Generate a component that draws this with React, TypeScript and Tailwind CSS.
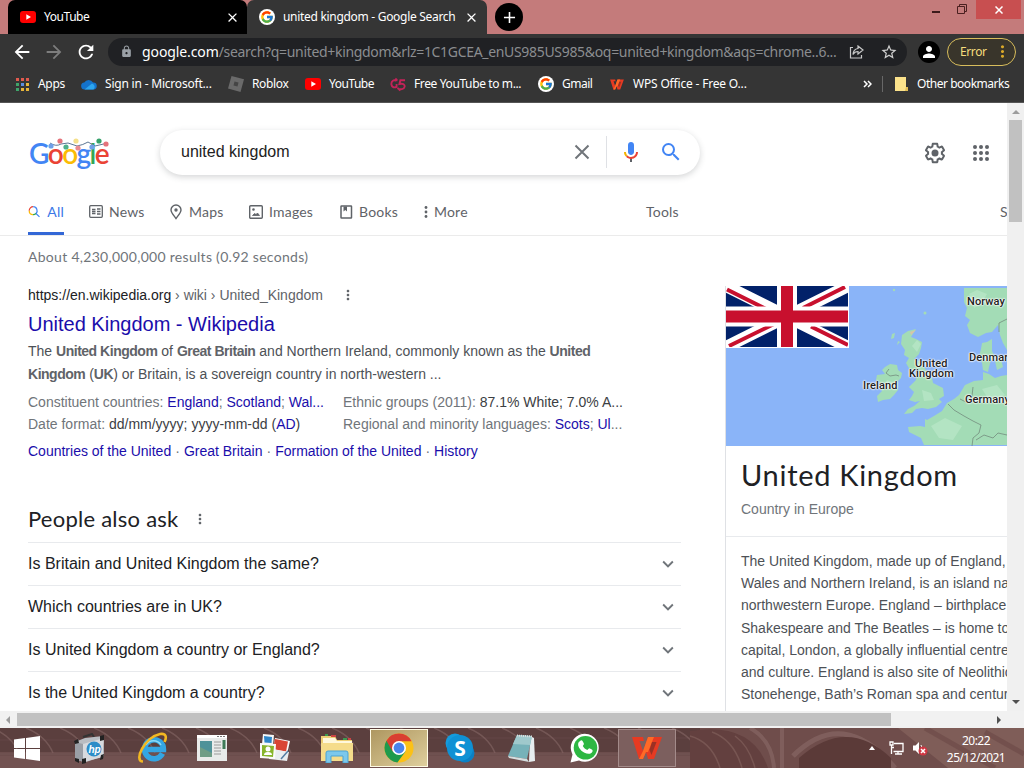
import type { ReactNode } from "react";
import clsx from "clsx";
import { FcGoogle } from "react-icons/fc";
import {
  MdArrowBack,
  MdArrowForward,
  MdRefresh,
  MdLock,
  MdStarBorder,
  MdPerson,
  MdClose,
  MdAdd,
  MdKeyboardArrowDown,
  MdMoreVert,
  MdSearch,
} from "react-icons/md";

const questions = [
  "Is Britain and United Kingdom the same?",
  "Which countries are in UK?",
  "Is United Kingdom a country or England?",
  "Is the United Kingdom a country?",
];

const aboutLines = [
  "The United Kingdom, made up of England,",
  "Wales and Northern Ireland, is an island nation",
  "northwestern Europe. England – birthplace",
  "Shakespeare and The Beatles – is home to",
  "capital, London, a globally influential centre",
  "and culture. England is also site of Neolithic",
  "Stonehenge, Bath’s Roman spa and centuries",
];

const garland = [
  { x: 22, y: 8, color: "#6f9fe8" },
  { x: 31, y: 3, color: "#e5737b" },
  { x: 37, y: 9, color: "#4fb08a" },
  { x: 47, y: 3, color: "#f5e08a" },
  { x: 49, y: 10, color: "#e98a8f" },
  { x: 63, y: 9, color: "#6f9fe8" },
  { x: 70, y: 3, color: "#36a26b" },
  { x: 77, y: 6, color: "#e5737b" },
];

function YouTubeIcon() {
  return (
    <svg width="16" height="12" viewBox="0 0 16 12">
      <rect width="16" height="12" rx="3" fill="#f00" />
      <path d="M6.3 3.3v5.4L11 6z" fill="#fff" />
    </svg>
  );
}

function GoogleBadge() {
  return (
    <span className="flex h-4 w-4 items-center justify-center rounded-full bg-white">
      <FcGoogle className="h-[14px] w-[14px]" />
    </span>
  );
}

function WpsIcon({ className }: { className?: string }) {
  return (
    <svg viewBox="0 0 30 24" className={className}>
      <path d="M0 1h11l1 4H7.500l3.500 10L16 1h14l-8 22h-6l-2-7-3 7H7z" fill="#e63a22" />
      <path d="M16 1h6l-6 15h-2l-3 7H7l4-8z" fill="#ff6a26" />
      <path d="M20 6h4.500l-5 13-2-5z" fill="#5d2a26" opacity=".55" />
    </svg>
  );
}

function ChromeIcon() {
  return (
    <svg width="30" height="30" viewBox="0 0 30 30">
      <circle cx="15" cy="15" r="14.5" fill="#fbc117" />
      <path d="M15 15L2.4 7.7A14.5 14.5 0 0 0 13.4 29.4L21.5 18.5z" fill="#1e9a4d" />
      <path d="M2.4 7.7A14.5 14.5 0 0 1 27.6 8.2H15L8.6 18.5z" fill="#d93f32" />
      <circle cx="15" cy="15" r="7" fill="#fff" />
      <circle cx="15" cy="15" r="5.4" fill="#4a84ec" />
    </svg>
  );
}

function Tabs() {
  return (
    <div className="flex h-[34px] bg-[#c47b7b]">
      <div className="flex h-[34px] flex-1">
        <div className="ml-2 flex w-[239px] items-center rounded-t-[7px] bg-black pl-3 pr-[7px]">
          <YouTubeIcon />
          <span className="ml-2 flex-1 text-[12px] tracking-[-0.45px]">YouTube</span>
          <MdClose className="h-[15px] w-[15px]" />
        </div>
        <div className="flex w-[240px] items-center rounded-t-[7px] bg-[#353535] pl-3 pr-[8px]">
          <GoogleBadge />
          <span className="ml-2 flex-1 whitespace-nowrap text-[12px] tracking-[-0.3px]">united kingdom - Google Search</span>
          <MdClose className="h-[15px] w-[15px]" />
        </div>
        <div className="ml-2 mt-[3px] flex h-7 w-7 items-center justify-center rounded-full bg-black">
          <MdAdd className="h-[19px] w-[19px]" />
        </div>
      </div>
      <div className="flex h-[19px] items-start">
        <div className="mr-[17px] mt-[11px] h-[2px] w-2 bg-[#3b1a1a]" />
        <svg className="mr-[9px] mt-1" width="10" height="10" viewBox="0 0 10 10" fill="none" stroke="#4a2020">
          <path d="M.5 2.500h7v7h-7zM2.500 2.500v-2h7v7h-2" />
        </svg>
        <div className="mr-[3px] flex h-[19px] w-[45px] items-center justify-center bg-[#c84f50]">
          <svg width="8" height="8" viewBox="0 0 8 8" stroke="#fff" strokeWidth="1.5">
            <path d="M.5.5l7 7M7.500.5l-7 7" />
          </svg>
        </div>
      </div>
    </div>
  );
}

function AddressBar() {
  return (
    <div className="flex h-[35px] items-center bg-[#353535] pl-[11px]">
      <MdArrowBack className="h-[22px] w-[22px]" />
      <MdArrowForward className="ml-[10px] h-[22px] w-[22px] text-[#7d7d7d]" />
      <MdRefresh className="ml-[10px] h-[22px] w-[22px]" />
      <div className="ml-[11px] flex h-7 w-[799px] items-center rounded-full bg-[#202124] pl-3">
        <MdLock className="h-[13px] w-[13px] text-[#9aa0a6]" />
        <div className="ml-[9px] w-[700px] whitespace-nowrap text-[14px] tracking-[-0.32px] text-[#8b8d90]">
          <span className="tracking-[-0.1px] text-white">google.com</span>
          /search?q=united+kingdom&amp;rlz=1C1GCEA_enUS985US985&amp;oq=united+kingdom&amp;aqs=chrome..6...
        </div>
        <svg className="ml-[7px]" width="15" height="14" viewBox="0 0 15 14" fill="none" stroke="#c8c8c8" strokeWidth="1.2">
          <path d="M4 2.500H1.500v10.500h11V10" />
          <path d="M9 1l5 4-5 4V6.500C6.500 6.500 5 7.500 4 9.500c.2-3.500 2-5.500 5-6z" />
        </svg>
        <MdStarBorder className="ml-[16px] h-[18px] w-[18px] text-[#d0d0d0]" />
      </div>
      <div className="ml-[11px] flex h-[22px] w-[22px] items-center justify-center rounded-full bg-black">
        <MdPerson className="h-[18px] w-[18px]" />
      </div>
      <div className="ml-[7px] flex h-7 w-[69px] items-center rounded-full border border-[#d8bd5c] bg-[#39352b] pl-3 text-[12px] tracking-[-0.4px] text-[#f5dc7c]">
        Error
        <MdMoreVert className="ml-[6px] h-[19px] w-[19px] shrink-0 text-[#dba929]" />
      </div>
    </div>
  );
}

function Bookmark({ icon, label, className }: { icon: ReactNode; label: string; className?: string }) {
  return (
    <div className={clsx("flex shrink-0 items-center whitespace-nowrap text-[12px]", className)}>
      <span className="mr-2 flex w-4 justify-center">{icon}</span>
      {label}
    </div>
  );
}

function Bookmarks() {
  const dots = ["#e15a4e", "#e15a4e", "#e15a4e", "#3fa46a", "#5a8de0", "#e7b53a", "#3fa46a", "#e7b53a", "#e7b53a"];
  return (
    <div className="flex h-[34px] items-center border-b border-[#555] bg-[#353535] pb-[3px] pl-[14px]">
      <Bookmark
        className="w-[67px] tracking-[-0.3px]"
        label="Apps"
        icon={
          <span className="grid grid-cols-3 gap-[2px]">
            {dots.map((color, i) => (
              <span key={i} className="h-[3px] w-[3px]" style={{ background: color }} />
            ))}
          </span>
        }
      />
      <Bookmark
        className="w-[147px] tracking-[-0.2px]"
        label="Sign in - Microsoft..."
        icon={
          <svg width="16" height="11" viewBox="0 0 16 11">
            <path d="M4 10.500a3.500 3.500 0 0 1-.7-7A5 5 0 0 1 12 3.500a3.500 3.500 0 0 1 .5 7z" fill="#1473cc" />
            <path d="M3.500 10.500L11 4.500a3.500 3.500 0 0 1 1.500 6z" fill="#2ca5ee" />
          </svg>
        }
      />
      <Bookmark
        className="w-[77px] tracking-[-0.35px]"
        label="Roblox"
        icon={
          <svg width="16" height="16" viewBox="0 0 16 16">
            <path d="M3.500 0L16 3.300 12.500 16 0 12.500z" fill="#6a6a6a" />
            <path d="M6.500 5.500l4 1-1 4-4-1z" fill="#454545" />
          </svg>
        }
      />
      <Bookmark className="w-[85px] tracking-[-0.5px]" label="YouTube" icon={<YouTubeIcon />} />
      <Bookmark
        className="w-[148px] tracking-[-0.38px]"
        label="Free YouTube to m..."
        icon={
          <svg width="17" height="15" viewBox="0 0 17 15" fill="none" stroke="#c42359" strokeWidth="2">
            <path d="M8 3C4 2 1 4 1.500 7.500S5 11 7 10V7M7 1l-2 3M16 3H11l-1 4c4-1 6 .5 5.500 3S11 13.500 8 11.500M11 14l-3-3" />
          </svg>
        }
      />
      <Bookmark className="w-[71px] tracking-[-0.5px]" label="Gmail" icon={<GoogleBadge />} />
      <Bookmark
        className="w-[254px] tracking-[-0.18px]"
        label="WPS Office - Free O..."
        icon={<WpsIcon className="h-[11px] w-[14px]" />}
      />
      <svg width="9" height="8" viewBox="0 0 9 8" fill="none" stroke="#fff" strokeWidth="1.500">
        <path d="M1 1l3 3-3 3M5 1l3 3-3 3" />
      </svg>
      <div className="ml-[10px] h-4 w-px bg-[#686868]" />
      <Bookmark
        className="ml-[10px] tracking-[-0.47px]"
        label="Other bookmarks"
        icon={
          <svg width="13" height="14" viewBox="0 0 13 14">
            <path d="M0 0h11v10h2v4H0z" fill="#fbe28b" />
            <path d="M11 10h2v4h-3z" fill="#e2bd55" />
          </svg>
        }
      />
    </div>
  );
}

function GoogleLogo() {
  return (
    <div className="relative ml-[29px] h-[40px] w-[82px]">
      <div className="whitespace-nowrap pt-px font-['Lato'] text-[28px] font-semibold leading-[31px] tracking-[-1.55px]">
        <span className="text-[#4285f4]">G</span>
        <span className="text-[#ea4335]">o</span>
        <span className="text-[#fbbc05]">o</span>
        <span className="text-[#4285f4]">g</span>
        <span className="text-[#34a853]">l</span>
        <span className="text-[#ea4335]">e</span>
      </div>
      <svg className="absolute left-0 top-px" width="82" height="16" viewBox="0 0 82 16">
        <path d="M21 5q6 4 11 1l7-1 9 3q6-1 11-4l7 4 13-3" fill="none" stroke="#5d7795" strokeWidth="1" />
        {garland.map((b) => (
          <circle key={b.x} cx={b.x} cy={b.y} r="2.6" fill={b.color} />
        ))}
      </svg>
    </div>
  );
}

function SearchHeader() {
  return (
    <div className="flex h-[84px] pt-[27px]">
      <div className="w-[160px] pt-[7px]">
        <GoogleLogo />
      </div>
      <div className="flex h-[45px] w-[540px] items-center rounded-full pb-px pl-[21px] shadow-[0_2px_6px_rgba(60,64,67,0.22)]">
        <span className="w-[393px] text-[16px] text-[#222]">united kingdom</span>
        <svg width="16" height="16" viewBox="0 0 16 16" stroke="#70757a" strokeWidth="2">
          <path d="M1.500 1.500l13 13M14.500 1.500l-13 13" />
        </svg>
        <div className="ml-[16px] h-8 w-px bg-[#dfe1e5]" />
        <svg className="ml-[12px]" width="24" height="24" viewBox="0 0 24 24">
          <path d="M12 15c1.660 0 3-1.310 3-2.970V4.970C15 3.310 13.660 2 12 2S9 3.310 9 4.970v7.060C9 13.690 10.340 15 12 15z" fill="#4285f4" />
          <path d="M11 18.080h2V22h-2z" fill="#5f6368" />
          <path d="M7.050 16.870C5.770 15.590 5 13.900 5 12h2c0 1.400.56 2.490 1.470 3.370z" fill="#f4b400" />
          <path d="M12 16.930a4.970 5.250 0 0 1-3.540-1.550l-1.410 1.490c1.260 1.340 3.020 2.130 4.950 2.130 3.870 0 6.990-2.920 6.990-7h-1.990c0 2.920-2.240 4.930-5 4.930z" fill="#ea4335" />
        </svg>
        <MdSearch className="ml-[16px] h-6 w-6 text-[#4285f4]" />
      </div>
      <div className="ml-[223px] flex h-[46px] items-center">
        <svg width="24" height="24" viewBox="0 0 24 24" fill="#5f6368">
          <path d="M13.850 22.250h-3.700c-.74 0-1.360-.54-1.450-1.270l-.27-1.890c-.27-.14-.53-.29-.79-.46l-1.800.72c-.7.26-1.470-.03-1.810-.65L2.200 15.530c-.35-.66-.2-1.440.36-1.880l1.530-1.190c-.01-.15-.02-.3-.02-.46 0-.15.01-.31.02-.46l-1.520-1.190c-.59-.45-.74-1.260-.37-1.880l1.850-3.190c.34-.62 1.110-.9 1.790-.63l1.810.73c.26-.17.520-.32.780-.46l.27-1.910c.09-.7.710-1.250 1.440-1.250h3.700c.74 0 1.360.54 1.450 1.270l.27 1.890c.27.14.53.29.79.46l1.800-.72c.71-.26 1.480.03 1.820.65l1.840 3.180c.36.66.2 1.440-.36 1.880l-1.520 1.190c.01.15.02.300.02.460s-.01.310-.02.460l1.520 1.190c.56.45.72 1.230.37 1.860l-1.860 3.220c-.34.62-1.110.9-1.800.63l-1.800-.72c-.26.17-.52.32-.78.46l-.27 1.910c-.1.680-.72 1.220-1.460 1.220zm-3.230-2h2.760l.37-2.550.53-.22c.44-.18.880-.44 1.340-.78l.45-.34 2.380.96 1.380-2.400-2.030-1.580.07-.56c.03-.26.06-.51.06-.78s-.03-.53-.06-.78l-.07-.56 2.030-1.580-1.390-2.400-2.390.96-.45-.35c-.42-.32-.87-.58-1.330-.77l-.52-.22-.37-2.550h-2.760l-.37 2.550-.53.21c-.44.19-.88.44-1.340.79l-.45.33-2.380-.95-1.390 2.390 2.030 1.580-.07.560a7 7 0 0 0-.06.790c0 .26.02.53.06.780l.07.560-2.030 1.580 1.380 2.400 2.390-.96.45.35c.43.330.86.580 1.330.770l.53.220z" />
          <circle cx="12" cy="12" r="3.500" />
        </svg>
        <div className="ml-[26px] grid grid-cols-3 gap-[2px]">
          {Array.from({ length: 9 }, (_, i) => (
            <span key={i} className="h-1 w-1 rounded-full bg-[#5f6368]" />
          ))}
        </div>
      </div>
    </div>
  );
}

function NavItem({ icon, label, className }: { icon: ReactNode; label: string; className?: string }) {
  return (
    <div className={clsx("flex h-full shrink-0 items-center", className)}>
      <span className="mr-[6px]">{icon}</span>
      {label}
    </div>
  );
}

function SearchNav() {
  return (
    <div className="flex h-[49px] items-center border-b border-[#ebebeb] pl-7 pt-px font-['Lato'] text-[14px] tracking-[0.2px] text-[#5f6368]">
      <div className="relative mr-[25px] flex h-full w-9 items-center text-[#3b78e7]">
        <svg width="15" height="15" viewBox="0 0 15 15" fill="none" strokeWidth="1.500">
          <path d="M1.500 6.500A4.800 4.800 0 0 1 6.300 1.700" stroke="#ea4335" />
          <path d="M6.300 1.700A4.800 4.800 0 0 1 9.700 9.900l4.300 4.100" stroke="#4285f4" />
          <path d="M9.700 9.900A4.800 4.800 0 0 1 6 11.300" stroke="#34a853" />
          <path d="M6 11.300A4.800 4.800 0 0 1 1.500 6.500" stroke="#fbbc05" />
        </svg>
        <span className="ml-[7px]">All</span>
        <div className="absolute bottom-0 left-0 h-[3px] w-9 bg-[#3367d6]" />
      </div>
      <NavItem
        className="w-[80px]"
        label="News"
        icon={
          <svg width="14" height="13" viewBox="0 0 14 13" fill="none" stroke="#5f6368" strokeWidth="1.300">
            <rect x=".7" y=".7" width="12.600" height="11.600" rx="1" />
            <path d="M3 4.500h3.500M3 6.500h3.500M3 8.500h3.500" strokeWidth="1.600" />
            <path d="M8 4h3.500M8 6.500h3.500M8 9h3.500" />
          </svg>
        }
      />
      <NavItem
        className="w-[80px]"
        label="Maps"
        icon={
          <svg width="14" height="16" viewBox="0 0 14 16" fill="none" stroke="#5f6368" strokeWidth="1.400">
            <path d="M7 14.500C4 10.500 2 8.500 2 6a5 5 0 0 1 10 0c0 2.500-2 4.500-5 8.500z" />
            <circle cx="7" cy="6" r="1" fill="#5f6368" />
          </svg>
        }
      />
      <NavItem
        className="w-[91px]"
        label="Images"
        icon={
          <svg width="14" height="14" viewBox="0 0 14 14" fill="none" stroke="#5f6368" strokeWidth="1.400">
            <rect x=".7" y=".7" width="12.600" height="12.600" rx="1" />
            <path d="M3.500 10.500l2-2 1.500 1 1.500-1.500 2 2.500z" fill="#5f6368" strokeWidth=".8" />
            <circle cx="4.500" cy="4.500" r=".6" />
          </svg>
        }
      />
      <NavItem
        className="w-[84px]"
        label="Books"
        icon={
          <svg width="13" height="14" viewBox="0 0 13 14" fill="none" stroke="#5f6368" strokeWidth="1.500">
            <rect x="1" y="1" width="10.500" height="12" rx=".5" />
            <path d="M3.500 1.500h3.500v5l-1.700-1.500-1.800 1.500z" fill="#5f6368" stroke="none" />
          </svg>
        }
      />
      <div className="flex w-[222px] shrink-0 items-center">
        <svg className="mr-[6px]" width="4" height="12" viewBox="0 0 4 12" fill="#5f6368">
          <circle cx="2" cy="1.500" r="1.400" />
          <circle cx="2" cy="6" r="1.400" />
          <circle cx="2" cy="10.500" r="1.400" />
        </svg>
        More
      </div>
      <span className="w-[354px] shrink-0">Tools</span>
      <span>SafeSearch</span>
    </div>
  );
}

function Bold({ children }: { children: ReactNode }) {
  return <b className="tracking-[-0.48px] text-[#5f6368]">{children}</b>;
}

function TopResult() {
  return (
    <div className="text-[14px] text-[#4d5156]">
      <div className="flex h-[32px] items-center text-[#5f6368]">
        <span className="text-[#202124]">https://en.wikipedia.org</span>
        <span>&nbsp;› wiki › United_Kingdom</span>
        <MdMoreVert className="ml-[17px] h-4 w-4" />
      </div>
      <h3 className="h-[26px] whitespace-nowrap text-[20px] leading-[26px] text-[#1a0dab]">United Kingdom - Wikipedia</h3>
      <p className="mt-[3px] whitespace-nowrap leading-[23px]">
        The <Bold>United Kingdom</Bold> of <Bold>Great Britain</Bold> and Northern Ireland, commonly known as the <Bold>United</Bold>
        <br />
        <Bold>Kingdom</Bold> (<Bold>UK</Bold>) or Britain, is a sovereign country in north-western ...
      </p>
      <div className="mt-[5px] grid grid-cols-[315px_300px] whitespace-nowrap leading-[22px] text-[#70757a]">
        <div>
          Constituent countries: <span className="text-[#1a0dab]">England</span>; <span className="text-[#1a0dab]">Scotland</span>;{" "}
          <span className="text-[#1a0dab]">Wal...</span>
        </div>
        <div>
          Ethnic groups (2011): <span className="text-[#3c4043]">87.1% White; 7.0% A...</span>
        </div>
        <div>
          Date format: <span className="text-[#3c4043]">dd/mm/yyyy; yyyy-mm-dd (<span className="text-[#1a0dab]">AD</span>)</span>
        </div>
        <div>
          Regional and minority languages: <span className="text-[#1a0dab]">Scots</span>; <span className="text-[#1a0dab]">Ul</span>...
        </div>
      </div>
      <div className="flex h-[32px] items-center gap-[4px] whitespace-nowrap text-[#1a0dab]">
        <span>Countries of the United</span>
        <span className="text-[#70757a]">·</span>
        <span>Great Britain</span>
        <span className="text-[#70757a]">·</span>
        <span>Formation of the United</span>
        <span className="text-[#70757a]">·</span>
        <span>History</span>
      </div>
    </div>
  );
}

function PeopleAlsoAsk() {
  return (
    <div className="mt-[35px] w-[653px]">
      <div className="mb-[8px] flex h-8 items-center text-[#202124]">
        <h2 className="font-['Lato'] text-[22px] tracking-[0.24px]">People also ask</h2>
        <MdMoreVert className="ml-[14px] mt-[2px] h-4 w-4 text-[#5f6368]" />
      </div>
      {questions.map((q) => (
        <div key={q} className="flex h-[43px] items-center justify-between border-t border-[#e8eaed] pr-[2px] text-[16px] text-[#202124]">
          {q}
          <MdKeyboardArrowDown className="h-[22px] w-[22px] text-[#70757a]" />
        </div>
      ))}
    </div>
  );
}

function UnionJack() {
  return (
    <svg className="absolute left-0 top-0" width="123" height="62" viewBox="0 0 123 62">
      <rect width="123" height="62" fill="#fff" />
      <svg width="122" height="61" viewBox="0 0 122 61">
        <rect width="122" height="61" fill="#012169" />
        <path d="M0 0L122 61M122 0L0 61" stroke="#fff" strokeWidth="12" />
        <path d="M1 3.500L42 24M119 1L77 22M3 60L48 38M85 40.500L122 59" stroke="#c8102e" strokeWidth="4" />
        <path d="M61 0v61M0 30.500h122" stroke="#fff" strokeWidth="20" />
        <path d="M61 0v61M0 30.500h122" stroke="#c8102e" strokeWidth="12" />
      </svg>
    </svg>
  );
}

function MapLabel({ className, children }: { className: string; children: ReactNode }) {
  return (
    <span
      className={clsx(
        "absolute whitespace-nowrap text-center font-['Roboto'] text-[11px] font-medium leading-[10px] tracking-[0.1px] text-[#222] [text-shadow:0_0_2px_#fff,0_0_2px_#fff,0_0_2px_#fff,0_0_1px_#fff]",
        className
      )}
    >
      {children}
    </span>
  );
}

function MapPreview() {
  return (
    <div className="relative h-[160px] w-[281px] overflow-hidden bg-[#8ab4f8]">
      <svg width="281" height="160" viewBox="0 0 281 160">
        <g fill="#a3dcb6">
          <path d="M238 2h43v62l-4-7-3-8-2-10-6 7-6 1-8 4-8-4-3-8 3-5-5-4 2-8-3-6z" />
          <path d="M176 49l6-4 8-2-5 8 5 2 6 3-1 6-2 6-5 5 7 3 5 8 6 8 1 5 4 2 6 3 1 8-5 3 3 3-6 5-8 2-6-1-6 1-4 4-8 1 4-5 6-3 6-5-5 1-6-2 3-4 2-4-5-5 4-4 3-3 1-8 1-3-8 1-4-7 3-5-5-3 1-5-4-6z" />
          <path d="M159 81l5-3 7 1 1 5 4 3-1 5-3 3v9l-4 5-4 4-7 1-5 2-1-6 5-5-3-5 1-4-4-2 1-5 8-1-3-4z" />
          <path d="M281 89l-6 1-6 2-6-4-6-2v8l-9 1-9 4-3 5-3 5-5 4-7 4-5 8-8 5-7 4-2-1v8l-5-1-12 1 1 5 6 3 6 3 3 7h84z" />
          <path d="M256 57l5-1 5-3v12l3 6-4 3-2 7-1 5-5-2-1-7-3-6 2-8zM269 75l6-2 2 8-6 3zM166 48l3-1-1 5-3 1zM172 55l2 1-3 3z" />
          <circle cx="199" cy="27" r="1.500" />
          <circle cx="168" cy="4" r="1.200" />
        </g>
        <g fill="#b3e4c3">
          <path d="M243 8l8-4 10 4-6 10-7 4zM191 54l4 4-4 8-5-6zM205 140l14-8 17 8-9 14-14-2zM256 103l15-4 8 10-14 8z" />
          <path d="M161 94l6 2-4 8-6-2zM196 104l9 3 3 7-10 1z" />
        </g>
        <path d="M184 46l6-2-5 5z" fill="#d9c2a8" />
        <path d="M163 83l-3 4 4 3 6-1 3 1M222 118l6 6 10 6 9 5 8 4-2 8-6 5-1 8M234 113l8 4 4-7 1-9M250 154l8-5 9 3 5-5 9 2M281 33l-8 4v9" fill="none" stroke="#738d7d" strokeWidth=".8" />
      </svg>
      <UnionJack />
      <MapLabel className="left-[241px] top-[11px]">Norway</MapLabel>
      <MapLabel className="left-[189px] top-[73px]">United</MapLabel>
      <MapLabel className="left-[183px] top-[83px]">Kingdom</MapLabel>
      <MapLabel className="left-[137px] top-[95px]">Ireland</MapLabel>
      <MapLabel className="left-[243px] top-[67px]">Denmark</MapLabel>
      <MapLabel className="left-[239px] top-[109px]">Germany</MapLabel>
    </div>
  );
}

function KnowledgePanel() {
  return (
    <aside className="mt-[50px] w-[282px] shrink-0 overflow-hidden border-l border-[#dfe1e5]">
      <MapPreview />
      <div className="h-[91px] border-b border-[#e8eaed] pl-[15px] pt-[10px]">
        <h2 className="whitespace-nowrap font-['Lato'] text-[29px] leading-[38px] tracking-[0.7px] text-[#202124]">United Kingdom</h2>
        <div className="mt-[5px] text-[14px] leading-[20px] text-[#70757a]">Country in Europe</div>
      </div>
      <div className="pl-[15px] pt-[13px] text-[14px] leading-[22.2px] text-[#4d5156]">
        {aboutLines.map((line) => (
          <div key={line} className="whitespace-nowrap">{line}</div>
        ))}
      </div>
    </aside>
  );
}

function VerticalScrollbar() {
  return (
    <div className="flex w-[17px] flex-col items-center justify-between bg-[#f0f0f0] pb-[7px] pt-[7px]">
      <div>
        <div className="mx-auto h-0 w-0 border-x-[4px] border-b-[4px] border-x-transparent border-b-[#9c9c9c]" />
        <div className="mt-[6px] h-[102px] w-[13px] bg-[#c1c1c1]" />
      </div>
      <div className="h-0 w-0 border-x-[4px] border-t-[4px] border-x-transparent border-t-[#505050]" />
    </div>
  );
}

function TaskItem({ children, className }: { children: ReactNode; className: string }) {
  return <div className={clsx("flex h-[38px] shrink-0 items-center justify-center", className)}>{children}</div>;
}

function Taskbar() {
  return (
    <div className="relative h-10 overflow-hidden bg-[#6b4b49]">
      <svg className="absolute inset-0" width="1024" height="40" viewBox="0 0 1024 40" fill="none">
        <rect width="700" height="24" fill="#5b3f3e" />
        <path d="M0 26h700" stroke="#6f5150" strokeWidth="3" />
        <path d="M0 12h330M410 10h290" stroke="#654746" />
        {Array.from({ length: 22 }, (_, i) => (
          <path key={i} d={`M${i * 34 - 8} 0q20 8 27 25`} stroke="#866765" strokeWidth="1.500" opacity=".6" />
        ))}
        <path d="M0 34h700" stroke="#7c5c5b" strokeWidth="12" opacity=".45" />
        <path d="M700 0h324v40H700z" fill="#6f4d4b" />
        <path d="M690 3q62-10 78 37h-78z" fill="#63403f" />
        <path d="M690 8q22 6 30 32M712 4q22 8 30 36M735 8q14 10 20 32" stroke="#86645f" strokeWidth="1.500" opacity=".6" />
        <path d="M750 0q22 12 24 40M782 0v40" stroke="#8a6a67" strokeWidth="4" opacity=".6" />
        <path d="M793 28q50-50 102 12" stroke="#8a6a67" strokeWidth="5" opacity=".6" />
        <path d="M799 30q48-42 92 0v10h-92z" fill="#5b3a38" />
        <path d="M898 0h126v40h-76z" fill="#7f5d58" />
        <path d="M925 0l70 40M985 4l39 22" stroke="#6d4b48" strokeWidth="5" opacity=".7" />
      </svg>
      <div className="relative flex h-full items-center pr-[16px]">
        <TaskItem className="w-[54px]">
          <svg width="26" height="25" viewBox="0 0 26 25" fill="#fff">
            <path d="M0 3.500l11-1.500v10H0zM12 1.900L26 0v12H12zM0 13h11v10L0 21.500zM12 13h14v12l-14-1.900z" />
          </svg>
        </TaskItem>
        <TaskItem className="w-[70px]">
          <svg width="32" height="31" viewBox="0 0 32 31">
            <path d="M10 4l9-3 2 3" fill="none" stroke="#333" strokeWidth="2" />
            <path d="M2 9l10-4 18-2 1 20-18 6-9-2z" fill="#b9bdc2" />
            <path d="M2 9l8 2v18l-8-3z" fill="#9a9fa6" />
            <path d="M10 11L31 5l-1 19-20 5z" fill="#d7dade" />
            <path d="M1 8l4-2 1 4-4 1zM27 3l4-1v5l-4 1zM2 25l4 1v4l-4-2zM9 26l4-1v5l-4 1zM28 22l3-1-1 5-3 1z" fill="#222" />
            <circle cx="21" cy="16" r="7.500" fill="#2d8dc8" />
            <text x="15.500" y="20" fontSize="10" fontStyle="italic" fontWeight="bold" fill="#fff" fontFamily="Liberation Sans, sans-serif">hp</text>
          </svg>
        </TaskItem>
        <TaskItem className="w-[58px]">
          <svg width="32" height="32" viewBox="0 0 32 32" fill="none">
            <path d="M25.500 21.500A9.500 9.500 0 1 1 26.500 17.500H9" stroke="#34a6e3" strokeWidth="5.500" />
            <path d="M9 13a8.500 8 0 0 1 15 0" stroke="#8bdaf8" strokeWidth="1.500" />
            <path d="M6 29.500C-4 29 8 5 23 2c6-1 7 3 4.500 8" stroke="#f2b822" strokeWidth="2.600" />
          </svg>
        </TaskItem>
        <TaskItem className="w-[60px]">
          <svg width="30" height="26" viewBox="0 0 30 26">
            <rect width="30" height="26" fill="#e9ebea" />
            <path d="M0 0h30v3H0z" fill="#fff" />
            <path d="M20 1.500h8" stroke="#777" strokeDasharray="2 1" />
            <rect x="3" y="6" width="12" height="16" fill="#4f9299" />
            <path d="M3 12l12 6v4H3z" fill="#6f9d86" />
            <path d="M17 7h7M17 10h7M17 13h7M17 16h7M17 19h7" stroke="#9a9a9a" />
            <rect x="25.500" y="5" width="3" height="9" fill="#3e7b58" />
          </svg>
        </TaskItem>
        <TaskItem className="w-[66px]">
          <svg width="32" height="28" viewBox="0 0 32 28">
            <path d="M4 0l11 1-1 10-11-1z" fill="#f5f7f8" />
            <path d="M5 2l8 1-.5 6-7-.5z" fill="#2e86c9" />
            <path d="M16 4l15 3-3 13-14-3z" fill="#f8f8f8" />
            <path d="M16 5l13 2.500-2 10-13-2.500z" fill="#d94534" />
            <path d="M12 15l18 3-2 9-18-2z" fill="#e9edf0" />
            <path d="M1 9l16 1-1 15-15-1z" fill="#fafafa" />
            <path d="M3 11l12 1-1 11-11-1z" fill="#87b52c" />
            <circle cx="9" cy="15" r="2.500" fill="#fff" />
            <path d="M5 21q0-3 4-3t4 3z" fill="#fff" />
            <path d="M29 17l-7 8" stroke="#527ca2" strokeWidth="1.500" />
          </svg>
        </TaskItem>
        <TaskItem className="w-[58px]">
          <svg width="32" height="29" viewBox="0 0 32 29">
            <path d="M0 2h14l2 4h15v21H0z" fill="#edcf75" />
            <path d="M4 1h3M22 5h4" stroke="#3d9a50" strokeWidth="2" />
            <path d="M10 2h5M27 5h3" stroke="#c44" strokeWidth="2" />
            <path d="M2 4h12l2 3h15v3H2z" fill="#fff8dc" />
            <path d="M0 9h32v18H0z" fill="#f5dc8b" />
            <path d="M5 29V19q0-2 2-2h18q2 0 2 2v10h-5v-7H10v7z" fill="#7cc8ec" stroke="#4aa3d4" />
          </svg>
        </TaskItem>
        <TaskItem className="ml-[4px] w-[58px] border border-[#fffbe5] bg-gradient-to-br from-[#ae9760] to-[#dfcf9d]">
          <ChromeIcon />
        </TaskItem>
        <TaskItem className="w-[64px]">
          <svg width="30" height="30" viewBox="0 0 30 30">
            <circle cx="10" cy="10" r="9.500" fill="#159bdc" />
            <circle cx="20" cy="20" r="9.500" fill="#0a80c5" />
            <circle cx="15" cy="15" r="13" fill="#0f91d4" />
            <text x="15" y="22.500" textAnchor="middle" fontSize="21" fontWeight="bold" fill="#fff" fontFamily="Open Sans, sans-serif">S</text>
          </svg>
        </TaskItem>
        <TaskItem className="w-[60px]">
          <svg width="28" height="28" viewBox="0 0 28 28">
            <path d="M22 2l4 2 1 23-6 1z" fill="#e7edef" />
            <path d="M9 1l15 1-5 23L0 22z" fill="#76b2b9" />
            <path d="M9 1l15 1-2 9L5 10z" fill="#9fc9cc" />
            <path d="M19 25L0 22l1 2 20 4z" fill="#d5dedf" />
            <path d="M9 1.500l15 1" stroke="#ddd" strokeWidth="2" strokeDasharray="1 1" />
          </svg>
        </TaskItem>
        <TaskItem className="w-[66px]">
          <svg width="30" height="30" viewBox="0 0 30 30">
            <path d="M.5 29.500l2-8A14 14 0 1 1 9 27.500z" fill="#fff" />
            <circle cx="15.500" cy="14.800" r="11.800" fill="#2db742" />
            <path d="M10 8c2-1.500 2.500-.5 4 3l-1.200 2c1 2 2.500 3 4.500 4l1.800-1.800c3 1.300 4 1.600 3.400 3.300-1 2.500-4.500 3-8 1.200-4.500-2.200-7.500-7-6-10.200z" fill="#fff" />
          </svg>
        </TaskItem>
        <TaskItem className="w-[58px] border border-[#a38b8a] bg-[#7c5f5e]">
          <WpsIcon className="h-6 w-[30px]" />
        </TaskItem>
        <div className="flex-1" />
        <div className="h-0 w-0 border-x-[3.500px] border-b-[4px] border-x-transparent border-b-white" />
        <svg className="ml-[14px]" width="15" height="14" viewBox="0 0 15 14" fill="none" stroke="#fff" strokeWidth="1.300">
          <path d="M5 2.500h9v8H4.500M9 10.500V13M6 13h7M2.500 4v9M1 1h3v3H1zM2.500 6.500H5" />
        </svg>
        <svg className="ml-[9px]" width="15" height="15" viewBox="0 0 15 15">
          <path d="M0 4.500h2.500L6 1v12L2.500 9.500H0z" fill="#fff" />
          <path d="M8 4q2 3 0 6" stroke="#fff" fill="none" />
          <circle cx="10" cy="10" r="4.500" fill="#cf3743" />
          <path d="M8 8l4 4M12 8l-4 4" stroke="#fff" strokeWidth="1.500" />
        </svg>
        <div className="ml-[16px] w-[64px] whitespace-nowrap pt-px text-center text-[12px] leading-[17px] tracking-[-0.55px] text-white">
          20:22
          <br />
          25/12/2021
        </div>
      </div>
    </div>
  );
}

export default function App() {
  return (
    <div className="h-[768px] w-[1024px] overflow-hidden bg-white font-['Noto_Sans',sans-serif]">
      <div className="bg-[#353535] text-white">
        <Tabs />
        <AddressBar />
        <Bookmarks />
      </div>
      <div className="flex h-[608px] font-['Liberation_Sans',Arial,sans-serif]">
        <div className="w-[1007px] overflow-hidden">
          <SearchHeader />
          <SearchNav />
          <main className="flex">
            <div className="w-[725px] shrink-0 pl-7">
              <div className="flex h-[43px] items-center pb-[2px] font-['Lato'] text-[14px] tracking-[0.29px] text-[#70757a]">
                About 4,230,000,000 results (0.92 seconds)
              </div>
              <TopResult />
              <PeopleAlsoAsk />
            </div>
            <KnowledgePanel />
          </main>
        </div>
        <VerticalScrollbar />
      </div>
      <div className="flex h-[17px] items-center bg-[#f1f1f1] pl-[6px]">
        <div className="h-0 w-0 border-y-[4px] border-r-[4px] border-y-transparent border-r-[#9c9c9c]" />
        <div className="ml-[7px] h-[13px] w-[874px] bg-[#c1c1c1]" />
        <div className="ml-[106px] h-0 w-0 border-y-[4px] border-l-[4px] border-y-transparent border-l-[#505050]" />
      </div>
      <Taskbar />
    </div>
  );
}
